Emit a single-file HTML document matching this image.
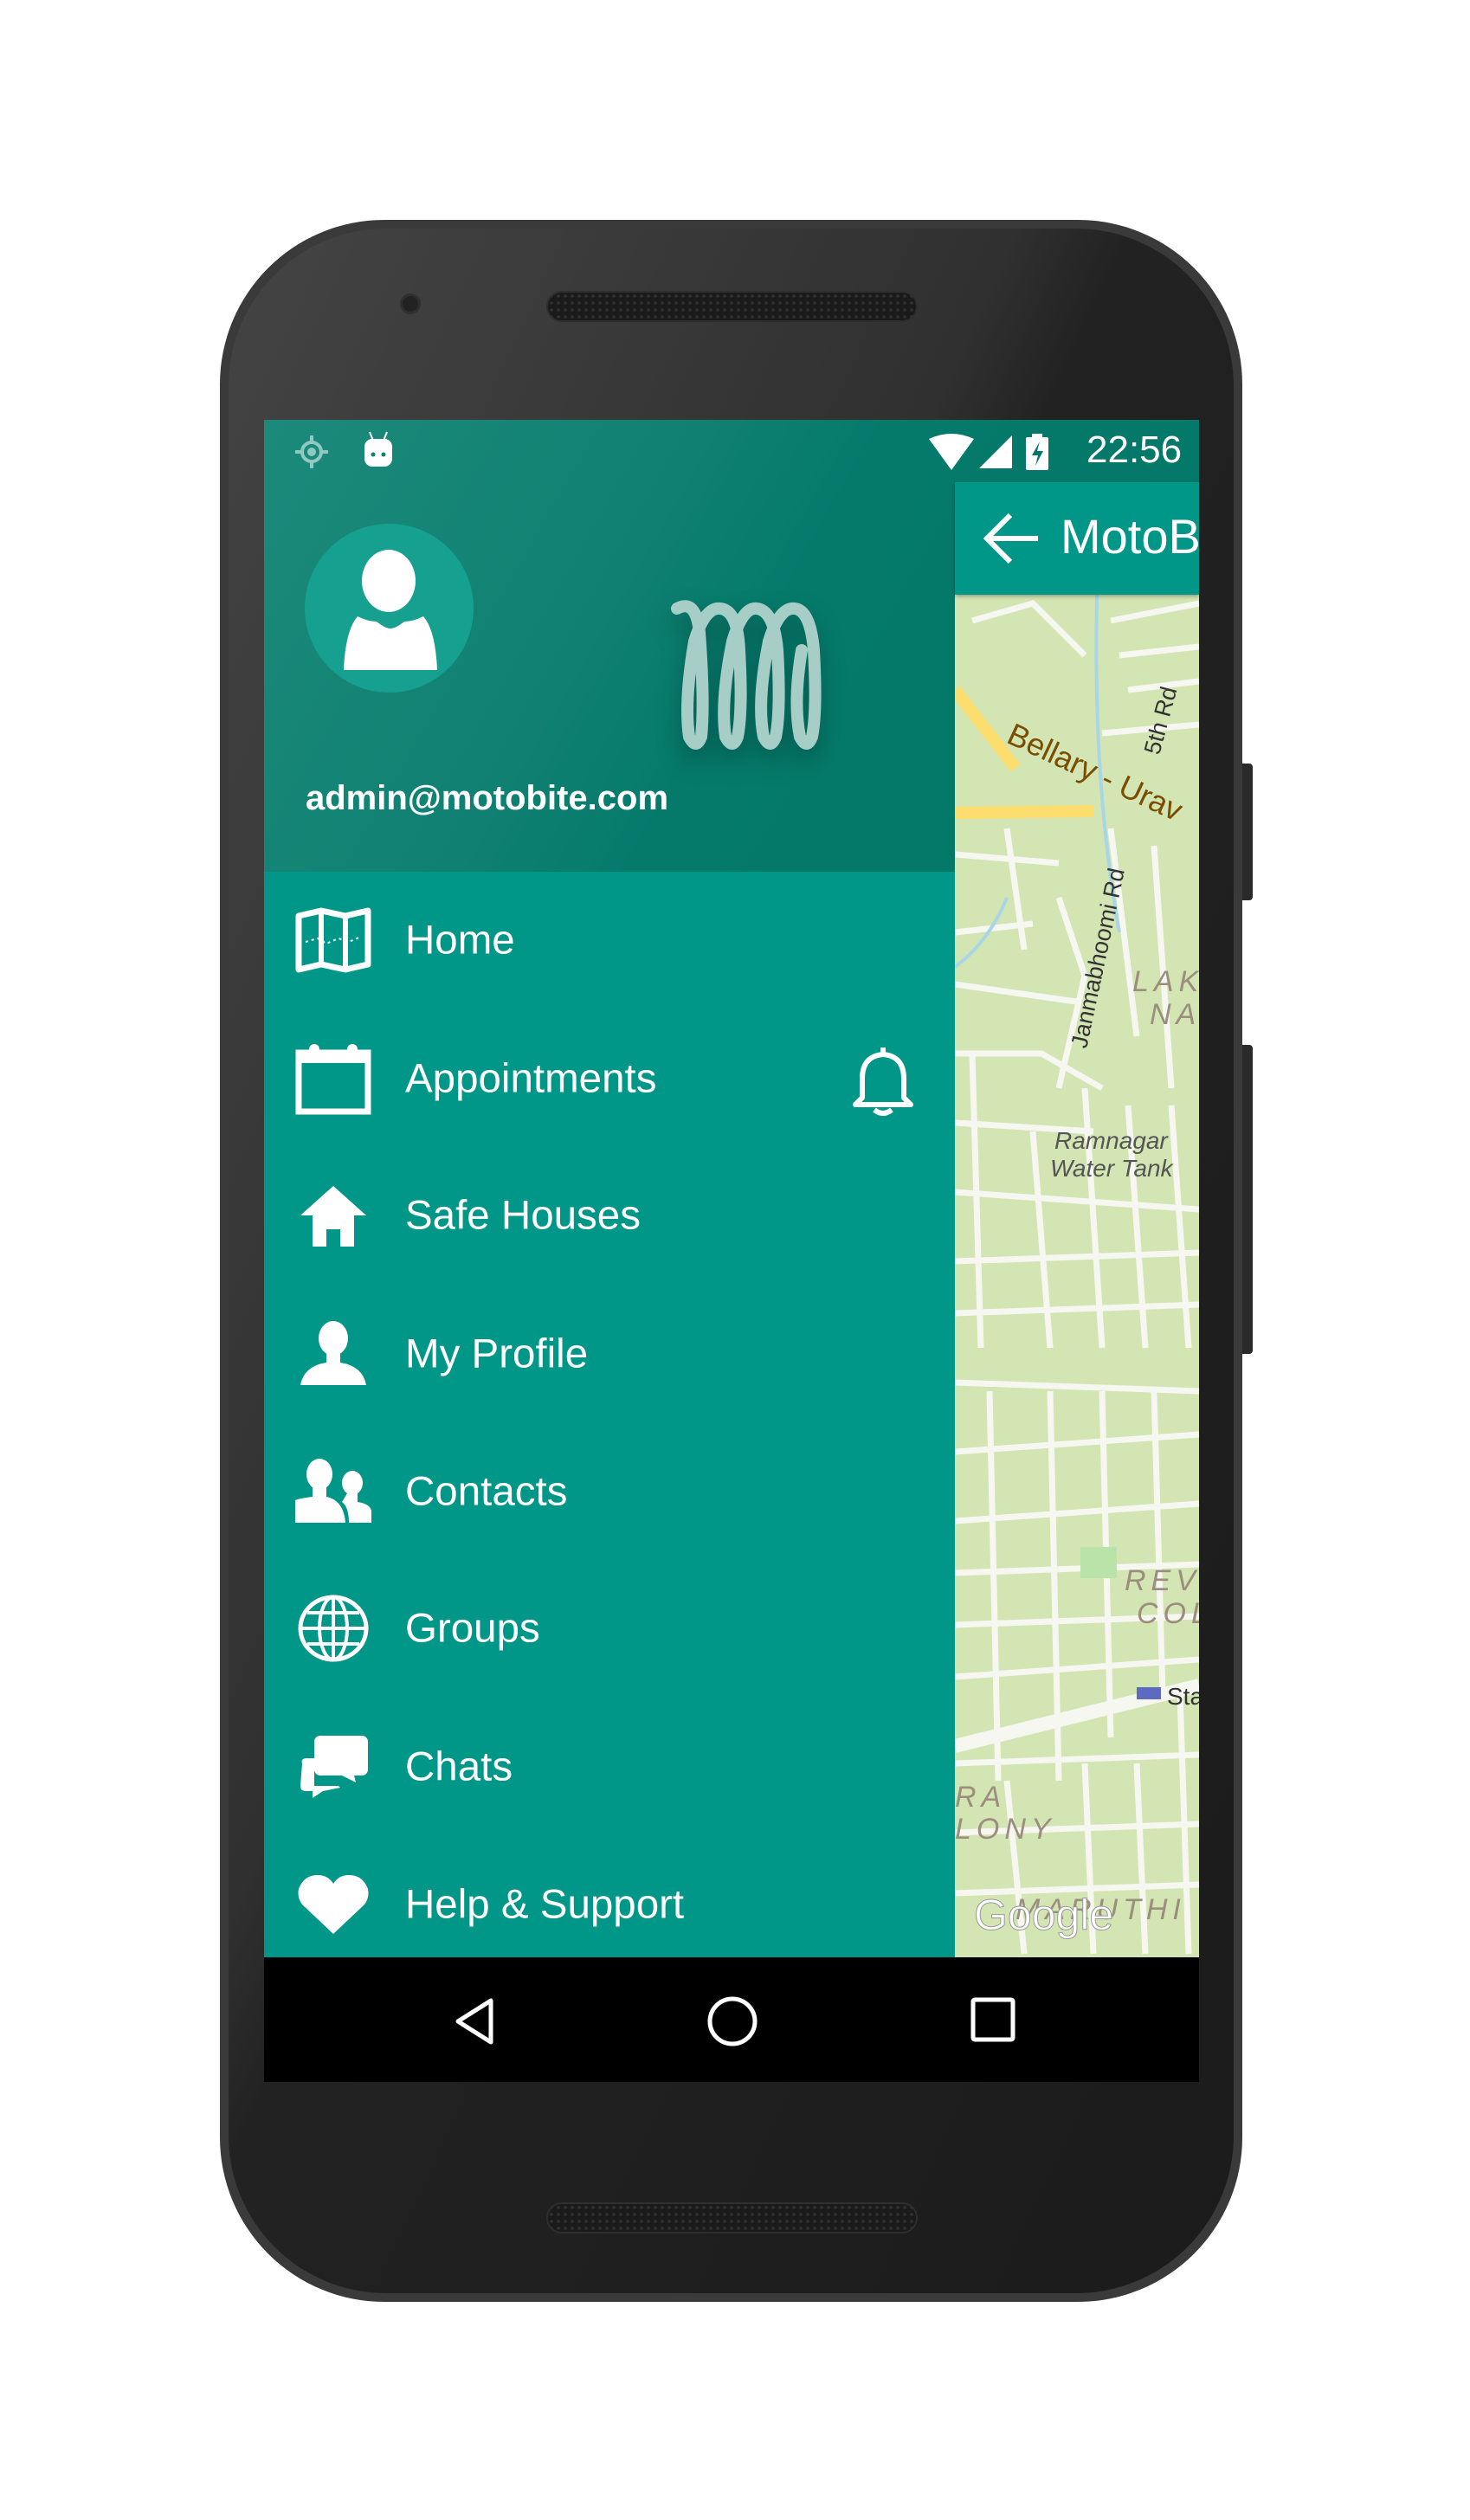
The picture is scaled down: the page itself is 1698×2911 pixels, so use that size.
<!DOCTYPE html>
<html><head><meta charset="utf-8"><style>
*{margin:0;padding:0;box-sizing:border-box}
body{width:1698px;height:2911px;background:#fff;position:relative;overflow:hidden;font-family:"Liberation Sans",sans-serif}
.phone{position:absolute;left:254px;top:254px;width:1181px;height:2405px;border-radius:190px;background:#3a3a3a;}
.phone-in{position:absolute;left:10px;top:10px;right:10px;bottom:10px;border-radius:182px;background:linear-gradient(115deg,#444 0%,#303030 40%,#222 46%,#1b1b1b 100%);}
.btn{position:absolute;background:#2a2a2a;border-radius:0 4px 4px 0}
.speaker{position:absolute;left:631px;width:429px;height:36px;border-radius:18px;background:#1a1a1a;border:2px solid #2e2e2e;background-image:radial-gradient(#333 1.5px,transparent 2px);background-size:8px 8px}
.screen{position:absolute;left:305px;top:485px;width:1080px;height:1920px;overflow:hidden;background:#000}
.hdr{position:absolute;left:0;top:0;width:1080px;height:522px;background:linear-gradient(120deg,#1c8a7b 0%,#0f8072 38%,#057a6b 52%,#037767 100%)}
.drawer{position:absolute;left:0;top:522px;width:798px;height:1254px;background:#009688}
.map{position:absolute;left:798px;top:72px;width:282px;height:1704px;background:#d3e5b3;overflow:hidden}
.appbar{position:absolute;left:798px;top:72px;width:282px;height:130px;background:#009688;box-shadow:0 2px 4px rgba(0,0,0,.3)}
.nav{position:absolute;left:0;top:1776px;width:1080px;height:144px;background:#000}
.item{position:absolute;left:0;width:798px;height:150px;color:#fff;font-size:47.5px}
.item span{position:absolute;left:163px;top:50%;transform:translateY(-50%)}
.item svg{position:absolute;left:36px;top:50%;transform:translateY(-50%)}
</style></head><body>
<div class="btn" style="left:1433px;top:882px;width:14px;height:158px"></div>
<div class="btn" style="left:1433px;top:1207px;width:14px;height:357px"></div>
<div class="phone"><div class="phone-in"></div></div>
<div class="speaker" style="top:336px"></div>
<div class="speaker" style="top:2544px"></div>
<div style="position:absolute;left:462px;top:339px;width:24px;height:24px;border-radius:50%;background:#222;border:3px solid #2f2f2f"></div>

<div class="screen">
  <div class="hdr"></div>
  <svg style="position:absolute;left:30px;top:14px" width="50" height="46" viewBox="0 0 50 46"><circle cx="25" cy="23" r="11" fill="none" stroke="#8fc9c0" stroke-width="4"/><circle cx="25" cy="23" r="5" fill="#8fc9c0"/><path d="M25 4v8M25 34v8M6 23h8M36 23h8" stroke="#8fc9c0" stroke-width="4"/></svg>
  <svg style="position:absolute;left:112px;top:12px" width="40" height="46" viewBox="0 0 40 46"><path d="M10 2l4 10M30 2l-4 10" stroke="#fff" stroke-width="2"/><rect x="4" y="10" width="32" height="32" rx="9" fill="#fff"/><circle cx="14" cy="28" r="2.5" fill="#0f8072"/><circle cx="26" cy="28" r="2.5" fill="#0f8072"/></svg>
  <svg style="position:absolute;left:768px;top:16px" width="190" height="42" viewBox="0 0 190 42"><path d="M0 6Q26 -6 52 6L26 42Z" fill="#fff"/><path d="M96 2V40H58Z" fill="#fff"/><rect x="112" y="4" width="26" height="38" rx="2" fill="#fff"/><rect x="119" y="0" width="12" height="5" fill="#fff"/><path d="M128 9l-9 16h7l-3 12 9-17h-7z" fill="#037767"/></svg>
  <div style="position:absolute;left:950px;top:10px;color:#fff;font-size:44px">22:56</div>
  <div style="position:absolute;left:47px;top:120px;width:195px;height:195px;border-radius:50%;background:#16a090"></div>
  <div style="position:absolute;left:113px;top:150px;width:62px;height:72px;border-radius:50%;background:#fff"></div>
  <svg style="position:absolute;left:90px;top:223px" width="112" height="66" viewBox="0 0 112 66"><path d="M18 4Q30 10 40 10Q50 18 56 18Q62 18 72 10Q82 10 94 4Q108 20 110 66H2Q4 20 18 4Z" fill="#fff"/></svg>
  <svg style="position:absolute;left:465px;top:206px;filter:drop-shadow(0 14px 14px rgba(0,0,0,.25))" width="200" height="180" viewBox="0 0 200 180"><path d="M8 12Q30 0 34 40Q40 120 36 160Q30 176 22 160Q16 120 28 50Q40 10 58 12Q78 14 80 60Q84 130 78 160Q72 176 64 160Q58 120 72 50Q84 10 100 12Q120 14 124 60Q128 130 122 160Q116 176 108 160Q100 120 114 50Q126 10 144 12Q162 14 166 60Q170 130 164 160Q158 176 150 160Q142 120 152 60" fill="none" stroke="#a7cdc7" stroke-width="14" stroke-linecap="round" transform="translate(4,0)"/></svg>
  <div style="position:absolute;left:48px;top:415px;color:#fff;font-size:40px;font-weight:bold">admin@motobite.com</div>

  <div class="drawer"></div>
  <div class="item" style="top:526px"><svg width="88" height="76" viewBox="0 0 88 76"><path d="M4 10L30 4L58 10L84 4V66L58 72L30 66L4 72Z" fill="none" stroke="#fff" stroke-width="7" stroke-linejoin="round"/><path d="M30 4V66M58 10V72" stroke="#fff" stroke-width="6"/><path d="M12 40L26 36L36 42L50 36L62 40L76 34" stroke="#fff" stroke-width="2" stroke-dasharray="3 4" fill="none"/></svg><span>Home</span></div>
  <div class="item" style="top:686px"><svg width="88" height="84" viewBox="0 0 88 84"><rect x="4" y="12" width="80" height="68" fill="none" stroke="#fff" stroke-width="7"/><rect x="4" y="12" width="80" height="12" fill="#fff"/><circle cx="22" cy="8" r="6" fill="#fff"/><circle cx="66" cy="8" r="6" fill="#fff"/></svg><span>Appointments</span></div>
  <svg style="position:absolute;left:679px;top:721px" width="72" height="84" viewBox="0 0 72 84"><path d="M36 4v6M12 62V40Q12 14 36 12Q60 14 60 40V62L68 70H4Z" fill="none" stroke="#fff" stroke-width="6" stroke-linejoin="round"/><path d="M26 76Q36 84 46 76" stroke="#fff" stroke-width="6" fill="none"/></svg>
  <div class="item" style="top:844px"><svg width="88" height="76" viewBox="0 0 88 76"><path d="M6 38L44 4L82 38H68V74H52V54H36V74H20V38Z" fill="#fff"/></svg><span>Safe Houses</span></div>
  <div class="item" style="top:1004px"><svg width="88" height="76" viewBox="0 0 88 76"><ellipse cx="44" cy="20" rx="17" ry="20" fill="#fff"/><path d="M36 36H52V48Q78 52 82 74H6Q10 52 36 48Z" fill="#fff"/></svg><span>My Profile</span></div>
  <div class="item" style="top:1163px"><svg width="88" height="76" viewBox="0 0 88 76"><ellipse cx="28" cy="18" rx="15" ry="18" fill="#fff"/><path d="M20 32H36V44Q56 48 58 74H0V48Q4 46 20 44Z" fill="#fff"/><ellipse cx="66" cy="28" rx="12" ry="14" fill="#fff"/><path d="M60 40H72V50Q86 52 88 60V74H62Q62 56 54 50Z" fill="#fff"/></svg><span>Contacts</span></div>
  <div class="item" style="top:1321px"><svg width="88" height="80" viewBox="0 0 88 80"><ellipse cx="44" cy="40" rx="38" ry="36" fill="none" stroke="#fff" stroke-width="5"/><ellipse cx="44" cy="40" rx="16" ry="36" fill="none" stroke="#fff" stroke-width="4"/><path d="M44 4V76M8 40H80M14 22H74M14 58H74" stroke="#fff" stroke-width="4"/></svg><span>Groups</span></div>
  <div class="item" style="top:1481px"><svg width="88" height="80" viewBox="0 0 88 80"><path d="M8 36Q6 30 14 30H22V62H50L52 64L32 68L20 76V68H12Q6 68 6 62Z" fill="#fff"/><rect x="22" y="4" width="62" height="46" rx="7" fill="#fff"/><path d="M54 50L70 58L68 50Z" fill="#fff"/></svg><span>Chats</span></div>
  <div class="item" style="top:1640px"><svg width="88" height="76" viewBox="0 0 88 76"><path d="M44 72L8 38Q2 30 4 20Q10 4 26 4Q38 4 44 14Q50 4 62 4Q78 4 84 20Q86 30 80 38Z" fill="#fff"/></svg><span>Help &amp; Support</span></div>

  <div class="map">
    <svg width="282" height="1704" viewBox="0 0 282 1704">
      <g stroke="#f7f7f2" stroke-width="7" fill="none">
        <path d="M20 160L90 140L150 200M40 100L100 60M180 160L282 140M190 200L282 190M200 240L282 230M170 290L282 280M0 430L120 440M0 520L90 510M0 580L140 600M120 480L150 570L120 700M60 400L80 540M180 400L210 640M230 420L250 700M0 660L100 660L170 700M0 740L160 750M0 820L282 840M20 660L30 1000M90 750L110 1000M150 700L170 1000M200 720L220 1000M250 720L270 1000M0 900L282 890M0 960L282 950M0 1040L282 1050M0 1120L282 1100M0 1200L282 1180M0 1260L282 1250M0 1320L282 1310M40 1050L50 1500M110 1050L120 1500M170 1050L180 1450M230 1050L240 1400M0 1380L282 1360M0 1480L282 1470M0 1560L282 1550M0 1630L282 1620M60 1500L80 1700M150 1480L160 1700M210 1480L220 1700M260 1400L270 1700"/>
        <path d="M0 1460L282 1390" stroke-width="16"/>
      </g>
      <path d="M0 240L70 330" stroke="#fcdd6e" stroke-width="14" fill="none"/>
      <path d="M0 382L160 380" stroke="#fcdd6e" stroke-width="14" fill="none"/>
      <path d="M170 0Q150 300 190 520" stroke="#a9d6e6" stroke-width="4" fill="none"/>
      <path d="M0 560Q40 530 60 480" stroke="#a9d6e6" stroke-width="4" fill="none"/>
      <rect x="145" y="1230" width="42" height="36" fill="#b9e3a8"/>
      <g font-family="Liberation Sans" fill="#7a4e00" font-size="36"><text x="58" y="300" transform="rotate(25 58 300)">Bellary - Urav</text></g>
      <g font-family="Liberation Sans" fill="#333" font-size="27"><text x="236" y="316" transform="rotate(-75 236 316)">5th Rd</text><text x="152" y="655" transform="rotate(-78 152 655)">Janmabhoomi Rd</text></g>
      <g font-family="Liberation Sans" font-style="italic" fill="#555" font-size="28"><text x="115" y="770">Ramnagar</text><text x="110" y="802">Water Tank</text><text x="245" y="1412" fill="#333" font-style="normal">Sta</text></g>
      <g font-family="Liberation Sans" font-style="italic" fill="#9b8e7e" font-size="34" letter-spacing="6"><text x="205" y="588">LAK</text><text x="225" y="626">NA</text><text x="196" y="1280">REVE</text><text x="210" y="1318">COL</text><text x="0" y="1530">RA</text><text x="0" y="1567">LONY</text><text x="70" y="1660">MARUTHI NA</text></g>
      <rect x="210" y="1392" width="28" height="14" fill="#5c6bc0"/>
      <text x="22" y="1672" font-family="Liberation Sans" font-size="50" fill="#fff" stroke="#999" stroke-width="1">Google</text>
    </svg>
  </div>
  <div class="appbar">
    <svg style="position:absolute;left:32px;top:32px" width="66" height="66" viewBox="0 0 66 66"><path d="M64 33H6M32 6L5 33L32 60" stroke="#fff" stroke-width="6" fill="none"/></svg>
    <div style="position:absolute;left:122px;top:30px;color:#fff;font-size:56px;white-space:nowrap">MotoBite</div>
  </div>
  <div class="nav">
    <svg style="position:absolute;left:218px;top:46px" width="50" height="56" viewBox="0 0 50 56"><path d="M44 4V52L6 28Z" fill="none" stroke="#fff" stroke-width="5" stroke-linejoin="round"/></svg>
    <svg style="position:absolute;left:511px;top:44px" width="60" height="60" viewBox="0 0 60 60"><circle cx="30" cy="30" r="26" fill="none" stroke="#fff" stroke-width="5"/></svg>
    <svg style="position:absolute;left:816px;top:46px" width="52" height="52" viewBox="0 0 52 52"><rect x="3" y="3" width="46" height="46" rx="2" fill="none" stroke="#fff" stroke-width="5"/></svg>
  </div>
</div>
</body></html>
